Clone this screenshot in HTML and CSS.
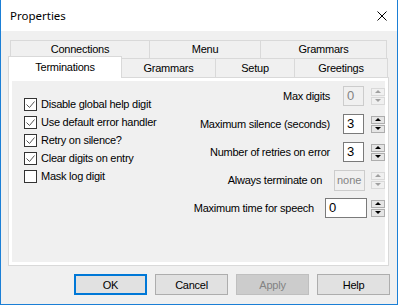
FILE: index.html
```html
<!DOCTYPE html>
<html lang="en">

<head>
    <meta charset="UTF-8">
    <title>Properties</title>
    <link rel="stylesheet" href="styles.css">
</head>

<body>
    <div class="window">
        <div class="titlebar">
            <span class="title">Properties</span>
            <svg class="close" width="10" height="10" viewBox="0 0 10 10">
                <path d="M0.5 0.5 L9.5 9.5 M9.5 0.5 L0.5 9.5" stroke="#000" stroke-width="1" fill="none" />
            </svg>
        </div>

        <div class="content">
            <div class="tab-row back">
                <div class="tab tab-connections">Connections</div>
                <div class="tab tab-menu">Menu</div>
                <div class="tab tab-grammars-back">Grammars</div>
            </div>
            <div class="tab-row front">
                <div class="tab active tab-terminations">Terminations</div>
                <div class="tab tab-grammars">Grammars</div>
                <div class="tab tab-setup">Setup</div>
                <div class="tab tab-greetings">Greetings</div>
            </div>

            <div class="panel">
                <div class="page">
                    <div class="checks">
                        <label class="check"><span class="box checked"></span>Disable global help digit</label>
                        <label class="check"><span class="box checked"></span>Use default error handler</label>
                        <label class="check"><span class="box checked"></span>Retry on silence?</label>
                        <label class="check"><span class="box checked"></span>Clear digits on entry</label>
                        <label class="check"><span class="box"></span>Mask log digit</label>
                    </div>

                    <div class="fields">
                        <div class="field">
                            <span class="label">Max digits</span>
                            <span class="edit disabled">0</span>
                            <span class="spin disabled"><span class="up"></span><span class="down"></span></span>
                        </div>
                        <div class="field">
                            <span class="label">Maximum silence (seconds)</span>
                            <span class="edit">3</span>
                            <span class="spin"><span class="up"></span><span class="down"></span></span>
                        </div>
                        <div class="field">
                            <span class="label">Number of retries on error</span>
                            <span class="edit">3</span>
                            <span class="spin"><span class="up"></span><span class="down"></span></span>
                        </div>
                        <div class="field">
                            <span class="label">Always terminate on</span>
                            <span class="edit disabled wide">none</span>
                            <span class="spin disabled"><span class="up"></span><span class="down"></span></span>
                        </div>
                        <div class="field">
                            <span class="label">Maximum time for speech</span>
                            <span class="edit long">0</span>
                            <span class="spin"><span class="up"></span><span class="down"></span></span>
                        </div>
                    </div>
                </div>
            </div>

            <div class="buttons">
                <button class="btn default">OK</button>
                <button class="btn">Cancel</button>
                <button class="btn" disabled>Apply</button>
                <button class="btn">Help</button>
            </div>
        </div>
    </div>
</body>

</html>
```

FILE: styles.css
```css
* {
    box-sizing: border-box;
}

body {
    margin: 0;
    background-color: #f0f0f0;
    color: #000;
    font-family: "Liberation Sans", Arial, sans-serif;
    font-size: 11px;
    letter-spacing: -0.25px;
}

.window {
    width: 398px;
    height: 305px;
    border: 1px solid #1b7fd6;
    border-top: none;
    display: flex;
    flex-direction: column;
}

.titlebar {
    height: 31px;
    background-color: #fff;
    display: flex;
    align-items: center;
    justify-content: space-between;
    padding: 0 10px 0 9px;
}

.title {
    font-family: "Noto Sans", "Open Sans", sans-serif;
    font-size: 11.5px;
    letter-spacing: 0;
}

.content {
    padding: 9px 7px 0 7px;
}

/* tab strip, two rows */
.tab-row {
    display: flex;
}

.tab-row.back {
    height: 18px;
    padding-left: 2px;
}

.tab-row.front {
    height: 21px;
    margin-top: -2px;
    align-items: flex-end;
}

.tab {
    height: 100%;
    border: 1px solid #d9d9d9;
    border-bottom: none;
    background-color: #f0f0f0;
    display: flex;
    align-items: center;
    justify-content: center;
    margin-left: -1px;
    padding-bottom: 1px;
}

.tab-row .tab:first-child {
    margin-left: 0;
}

.front .tab {
    height: 19px;
}

.front .tab.active {
    position: relative;
    z-index: 1;
    height: 22px;
    margin-bottom: -1px;
    background-color: #fff;
    padding-bottom: 2px;
}

.tab-connections { width: 140px; }
.tab-menu { width: 112px; }
.tab-grammars-back { width: 127px; }
.tab-terminations { width: 114px; }
.tab-grammars { width: 95px; }
.tab-setup { width: 80px; }
.tab-greetings { width: 94px; }

/* tab page */
.panel {
    width: 381px;
    height: 189px;
    border: 1px solid #d9d9d9;
    background-color: #fff;
    padding: 3px;
}

.page {
    height: 100%;
    background-color: #f0f0f0;
    display: flex;
    justify-content: space-between;
}

.checks {
    padding: 17px 0 0 12px;
    display: flex;
    flex-direction: column;
}

.check {
    height: 18px;
    display: flex;
    align-items: flex-start;
    gap: 4px;
    line-height: 13px;
}

.box {
    width: 13px;
    height: 13px;
    border: 1px solid #333;
    background-color: #fff;
    flex: none;
}

.box.checked {
    background: #fff url("data:image/svg+xml;utf8,<svg xmlns='http://www.w3.org/2000/svg' width='11' height='11'><path d='M1.5 5.5 L4.5 8.5 L9.5 2.5' stroke='%23555' stroke-width='1' fill='none'/></svg>") no-repeat center;
}

.fields {
    padding-top: 5px;
    display: flex;
    flex-direction: column;
    gap: 8px;
}

.field {
    height: 20px;
    display: flex;
    align-items: center;
    justify-content: flex-end;
}

.edit {
    width: 21px;
    height: 20px;
    margin-left: 13px;
    margin-right: 7px;
    border: 1px solid #7a7a7a;
    background-color: #fff;
    font-size: 13px;
    letter-spacing: 0;
    line-height: 18px;
    padding-left: 3px;
}

.edit.wide {
    width: 31px;
    height: 21px;
    margin-left: 12px;
    margin-right: 6px;
    font-size: 11px;
    line-height: 19px;
    padding-left: 2px;
}

.edit.long {
    width: 42px;
    margin-left: 11px;
    margin-right: 4px;
}

.edit.disabled {
    border-color: #ccc;
    background-color: #f0f0f0;
    color: #838383;
}

/* up/down arrows */
.spin {
    width: 14px;
    height: 17px;
    display: flex;
    flex-direction: column;
    gap: 1px;
}

.spin span {
    flex: 1;
    border: 1px solid #adadad;
    background-color: #e5e5e5;
    display: flex;
    align-items: center;
    justify-content: center;
}

.spin span::after {
    content: "";
    border-left: 3px solid transparent;
    border-right: 3px solid transparent;
}

.spin .up::after {
    border-bottom: 3px solid #000;
}

.spin .down::after {
    border-top: 3px solid #000;
}

.spin.disabled span {
    border-color: #d9d9d9;
    background-color: #f0f0f0;
}

.spin.disabled .up::after {
    border-bottom-color: #a0a0a0;
}

.spin.disabled .down::after {
    border-top-color: #a0a0a0;
}

/* dialog buttons */
.buttons {
    margin-top: 8px;
    display: flex;
    justify-content: flex-end;
    gap: 8px;
}

.btn {
    width: 73px;
    height: 21px;
    border: 1px solid #adadad;
    background-color: #e1e1e1;
    font-family: inherit;
    font-size: 11px;
    letter-spacing: -0.25px;
    color: #000;
    padding: 0;
}

.btn.default {
    border: 2px solid #0078d7;
}

.btn:disabled {
    border-color: #bfbfbf;
    background-color: #ccc;
    color: #838383;
}
```
